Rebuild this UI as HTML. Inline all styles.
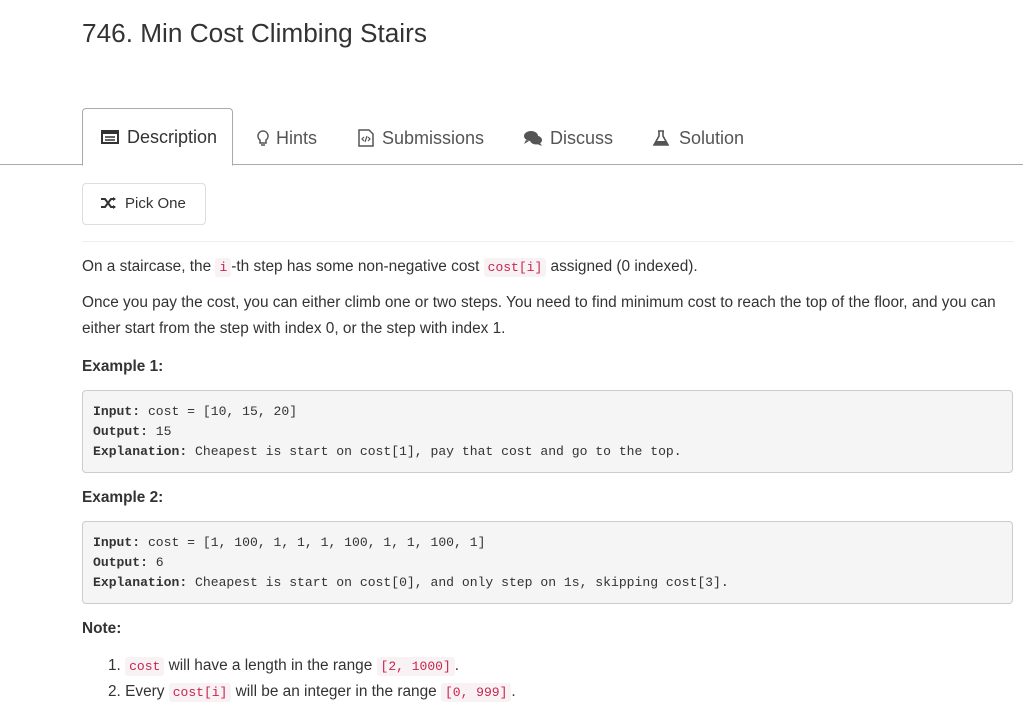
<!DOCTYPE html>
<html><head><meta charset="utf-8"><style>
*{margin:0;padding:0;box-sizing:border-box}
body{width:1023px;height:717px;overflow:hidden;background:#fff;font-family:"Liberation Sans",sans-serif;color:#333;position:relative}
.a{position:absolute;white-space:nowrap}
h1{position:absolute;left:82px;top:18px;font-size:26.2px;font-weight:normal;color:#333}
.tabs{position:absolute;left:0;top:164px;width:1023px;border-bottom:1px solid #aaa}
.act{position:absolute;left:82px;top:108px;width:151px;height:58px;border:1px solid #aaa;border-bottom:1px solid #fff;border-radius:4px 4px 0 0;background:#fff}
.tab{font-size:18px;color:#555;top:128px}
.btn{position:absolute;left:82px;top:183px;width:124px;height:42px;border:1px solid #ddd;border-radius:4px;font-size:15px;color:#333}
.p{font-size:15.4px;line-height:26px}
code{font-family:"Liberation Mono",monospace;font-size:13px;color:#c7254e;background:#f9f2f4;padding:2px 4px;border-radius:3px}
pre{position:absolute;left:82px;width:931px;height:83px;background:#f5f5f5;border:1px solid #ccc;border-radius:4px;padding:11px 10px;font-family:"Liberation Mono",monospace;font-size:13.08px;line-height:20px;color:#333}
b{font-weight:bold}
</style></head><body>
<h1>746. Min Cost Climbing Stairs</h1>
<div class="tabs"></div>
<div class="act"></div>
<div class="a tab" style="left:101px;top:127px;color:#333"><svg width="18" height="14" style="vertical-align:-1px;margin-right:8px" viewBox="0 0 18 14"><rect x="1" y="1" width="16" height="12" fill="none" stroke="#333" stroke-width="2"/><rect x="1" y="1" width="16" height="3" fill="#333"/><path d="M4 7h10M4 10h10" stroke="#333" stroke-width="1.5"/></svg>Description</div>
<div class="a tab" style="left:257px"><svg width="12" height="16" style="vertical-align:-2px;margin-right:7px" viewBox="0 0 12 16"><path d="M6 1a5 5 0 0 0-3 9v3h6v-3a5 5 0 0 0-3-9z" fill="none" stroke="#555" stroke-width="1.5"/><path d="M4 15h4" stroke="#555" stroke-width="1.5"/></svg>Hints</div>
<div class="a tab" style="left:358px"><svg width="16" height="18" style="vertical-align:-3px;margin-right:8px" viewBox="0 0 16 18"><path d="M1 1h10l4 4v12H1z" fill="none" stroke="#555" stroke-width="1.5"/><path d="M6 8l-2 2 2 2M10 8l2 2-2 2M9 7l-2 6" fill="none" stroke="#555" stroke-width="1.2"/></svg>Submissions</div>
<div class="a tab" style="left:523px"><svg width="20" height="16" style="vertical-align:-2px;margin-right:7px" viewBox="0 0 20 16"><ellipse cx="8" cy="6" rx="7" ry="5" fill="#555"/><path d="M3 10l-2 4 5-3z" fill="#555"/><ellipse cx="13" cy="10" rx="6" ry="4.5" fill="#555"/><path d="M17 13l2 3-5-2z" fill="#555"/></svg>Discuss</div>
<div class="a tab" style="left:653px"><svg width="16" height="16" style="vertical-align:-2px;margin-right:10px" viewBox="0 0 16 16"><path d="M5 1h6M6 1v5L1 15h14L10 6V1" fill="none" stroke="#555" stroke-width="1.6"/><path d="M3.5 11h9L15 15H1z" fill="#555"/></svg>Solution</div>
<div class="btn"><span class="a" style="left:18px;top:11px"><svg width="16" height="12" style="vertical-align:-1px;margin-right:8px" viewBox="0 0 16 12"><path d="M0 2h4l6 8h4M0 10h4l6-8h4" fill="none" stroke="#333" stroke-width="2"/><path d="M12 0l3 2-3 2zM12 8l3 2-3 2z" fill="#333"/></svg>Pick One</span></div>
<div class="a" style="left:82px;top:241px;width:932px;border-top:1px solid #eee"></div>
<div class="a p" style="left:82px;top:254px">On a staircase, the <code>i</code>-th step has some non-negative cost <code>cost[i]</code> assigned (0 indexed).</div>
<div class="a p" style="left:82px;top:290px">Once you pay the cost, you can either climb one or two steps. You need to find minimum cost to reach the top of the floor, and you can<br>either start from the step with index 0, or the step with index 1.</div>
<div class="a p" style="left:82px;top:354px"><b>Example 1:</b></div>
<pre style="top:390px"><b>Input:</b> cost = [10, 15, 20]
<b>Output:</b> 15
<b>Explanation:</b> Cheapest is start on cost[1], pay that cost and go to the top.</pre>
<div class="a p" style="left:82px;top:485px"><b>Example 2:</b></div>
<pre style="top:521px"><b>Input:</b> cost = [1, 100, 1, 1, 1, 100, 1, 1, 100, 1]
<b>Output:</b> 6
<b>Explanation:</b> Cheapest is start on cost[0], and only step on 1s, skipping cost[3].</pre>
<div class="a p" style="left:82px;top:616px"><b>Note:</b></div>
<div class="a p" style="left:108px;top:653px">1. <code>cost</code> will have a length in the range <code>[2, 1000]</code>.</div>
<div class="a p" style="left:108px;top:679px">2. Every <code>cost[i]</code> will be an integer in the range <code>[0, 999]</code>.</div>
</body></html>
